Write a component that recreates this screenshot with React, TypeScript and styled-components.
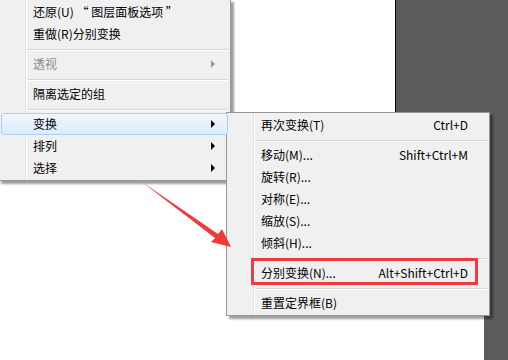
import React from "react";
import styled, { createGlobalStyle } from "styled-components";

const Global = createGlobalStyle`
  html, body { margin: 0; padding: 0; }
  body { width: 508px; height: 360px; overflow: hidden; background: #fff;
    font-family: "Noto Sans CJK SC", "Microsoft YaHei", sans-serif; font-size: 12px; }
`;

const Stage = styled.div`
  position: relative;
  width: 508px;
  height: 360px;
  display: flex;
  overflow: hidden;
`;

const WhiteArea = styled.div`
  width: 395px;
  background: #fff;
`;

const DarkArea = styled.div`
  flex: 1;
  background: #5b5b5b;
  border-left: 1px solid #000;
`;

const WhiteBlob = styled.div`
  position: absolute;
  left: 395px;
  top: 300px;
  width: 89px;
  height: 60px;
  background: #fff;
  border-top-right-radius: 10px;
`;

const Menu = styled.div<{ $left: number; $top: number; $width: number }>`
  position: absolute;
  left: ${(p) => p.$left}px;
  top: ${(p) => p.$top}px;
  width: ${(p) => p.$width}px;
  box-sizing: border-box;
  background: #f0f0f0;
  border: 1px solid #979797;
  box-shadow: 3px 3px 2px rgba(0, 0, 0, 0.38);
  padding: 1px 2px 1px 2px;
  display: flex;
  flex-direction: column;
  &::before {
    content: "";
    position: absolute;
    top: 0;
    bottom: 0;
    left: 26px;
    width: 1px;
    background: #e2e3e3;
    box-shadow: 1px 0 0 #fff;
  }
`;

const Row = styled.div<{ $hl?: boolean; $disabled?: boolean }>`
  position: relative;
  height: 22px;
  box-sizing: border-box;
  display: flex;
  align-items: center;
  padding: 0 20px 2px 31px;
  color: ${(p) => (p.$disabled ? "#8d8d8d" : "#000")};
  white-space: nowrap;
  border-radius: 3px;
  border: 1px solid ${(p) => (p.$hl ? "#a9d1f1" : "transparent")};
  background: ${(p) =>
    p.$hl ? "linear-gradient(#f1f7fd, #dcebfb)" : "transparent"};
  z-index: 1;
`;

const Label = styled.span`
  flex: 1;
`;

const Shortcut = styled.span`
  margin-left: 20px;
  margin-right: -2px;
`;

const Arrow = styled.span<{ $disabled?: boolean }>`
  width: 0;
  height: 0;
  border-top: 4px solid transparent;
  border-bottom: 4px solid transparent;
  border-left: 4px solid ${(p) => (p.$disabled ? "#9a9a9a" : "#000")};
  margin-right: -8px;
  margin-top: 2px;
`;

const Sep = styled.div`
  position: relative;
  height: 8px;
  margin-left: 26px;
  display: flex;
  align-items: center;
  &::after {
    content: "";
    flex: 1;
    height: 1px;
    background: #d7d7d7;
    box-shadow: 0 1px 0 #fff;
  }
`;

const Highlight = styled.div`
  position: absolute;
  left: 24px;
  top: 145px;
  width: 221px;
  height: 21px;
  border: 3px solid #f03c3c;
  z-index: 2;
  pointer-events: none;
`;

const ArrowSvg = styled.svg`
  position: absolute;
  left: 0;
  top: 0;
  z-index: 3;
`;

export default function App() {
  return (
    <>
      <Global />
      <Stage>
        <WhiteArea />
        <DarkArea />
        <WhiteBlob />

        <Menu $left={-2} $top={-1} $width={233}>
          <Row>
            <Label>还原(U) “ 图层面板选项 ”</Label>
          </Row>
          <Row>
            <Label>重做(R)分别变换</Label>
          </Row>
          <Sep />
          <Row $disabled>
            <Label>透视</Label>
            <Arrow $disabled />
          </Row>
          <Sep />
          <Row>
            <Label>隔离选定的组</Label>
          </Row>
          <Sep />
          <Row $hl>
            <Label>变换</Label>
            <Arrow />
          </Row>
          <Row>
            <Label>排列</Label>
            <Arrow />
          </Row>
          <Row>
            <Label>选择</Label>
            <Arrow />
          </Row>
        </Menu>

        <Menu $left={226} $top={112} $width={264}>
          <Row>
            <Label>再次变换(T)</Label>
            <Shortcut>Ctrl+D</Shortcut>
          </Row>
          <Sep />
          <Row>
            <Label>移动(M)...</Label>
            <Shortcut>Shift+Ctrl+M</Shortcut>
          </Row>
          <Row>
            <Label>旋转(R)...</Label>
          </Row>
          <Row>
            <Label>对称(E)...</Label>
          </Row>
          <Row>
            <Label>缩放(S)...</Label>
          </Row>
          <Row>
            <Label>倾斜(H)...</Label>
          </Row>
          <Sep />
          <Row>
            <Label>分别变换(N)...</Label>
            <Shortcut>Alt+Shift+Ctrl+D</Shortcut>
          </Row>
          <Sep />
          <Row>
            <Label>重置定界框(B)</Label>
          </Row>
          <Highlight />
        </Menu>

        <ArrowSvg width="508" height="360" viewBox="0 0 508 360">
          <polygon
            points="142,182 218,234 222,229 231,247 211,242 215,238"
            fill="#f03a3a"
          />
        </ArrowSvg>
      </Stage>
    </>
  );
}
